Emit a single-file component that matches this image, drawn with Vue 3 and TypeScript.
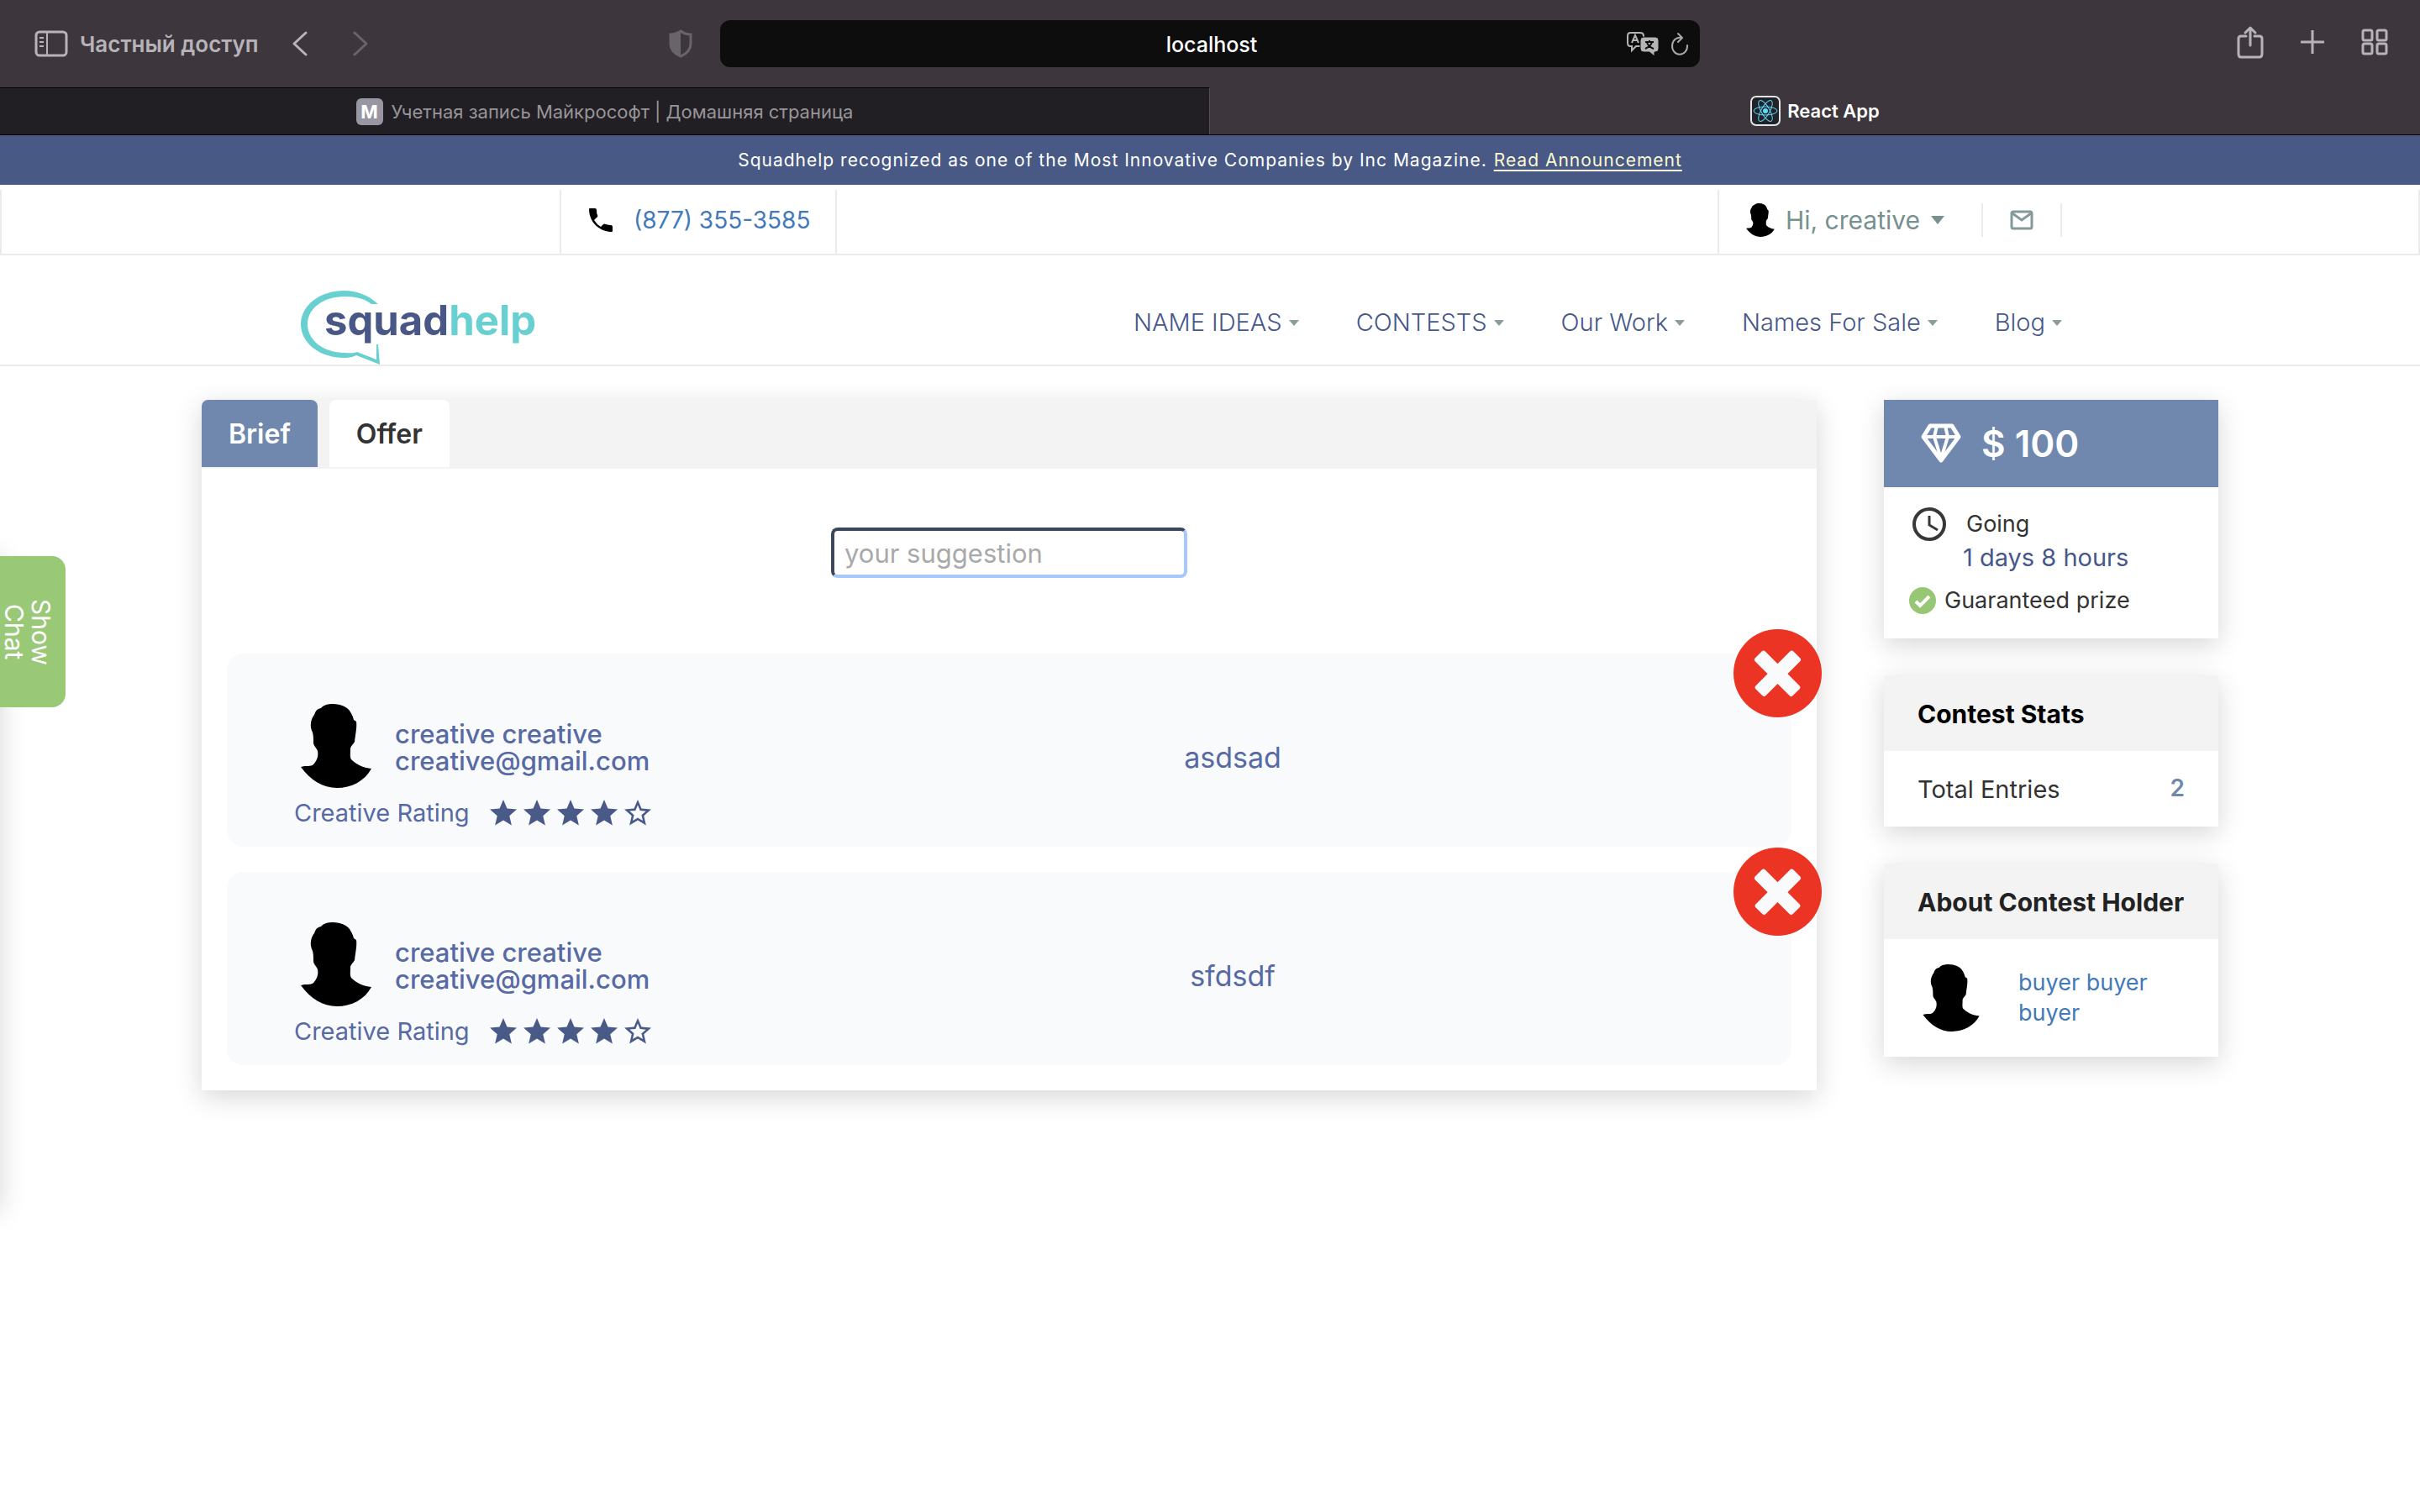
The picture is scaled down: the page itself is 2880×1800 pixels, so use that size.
<script setup lang="ts">
import { ref } from 'vue'

interface Offer {
  id: number
  name: string
  email: string
  text: string
  rating: number
}

const offers: Offer[] = [
  { id: 1, name: 'creative creative', email: 'creative@gmail.com', text: 'asdsad', rating: 4 },
  { id: 2, name: 'creative creative', email: 'creative@gmail.com', text: 'sfdsdf', rating: 4 },
]

const navItems: string[] = ['NAME IDEAS', 'CONTESTS', 'Our Work', 'Names For Sale', 'Blog']

const address = ref('localhost')
const suggestion = ref('')

const headPath =
  'M38 0 C48 0 55 4 58 8 C61 13 62 15 63 19 L66 21 C67 28 65 36 64 45 C62 49 59 50 59 54 C59 60 58 65 61 67 C66 72 74 76 84 77 C76 92 60 100 43 100 C26 100 12 91 0 75 C6 73 12 75 15 72 C20 67 21 61 20 56 C18 51 15 50 15 46 C15 41 15 38 14 34 C10 26 12 18 16 13 C18 8 19 6 24 5 C27 1 33 0 38 0Z'
const starPath =
  'M12 17.27L18.18 21l-1.64-7.03L22 9.24l-7.19-.61L12 2 9.19 8.63 2 9.24l5.46 4.73L5.82 21z'
const starOutlinePath =
  'M22 9.24l-7.19-.62L12 2 9.19 8.63 2 9.24l5.46 4.73L5.82 21 12 17.27 18.18 21l-1.63-7.03L22 9.24zM12 15.4l-3.76 2.27 1-4.28-3.32-2.88 4.38-.38L12 6.1l1.71 4.04 4.38.38-3.32 2.88 1 4.28L12 15.4z'
</script>

<template>
  <div class="page">
    <header class="browser">
      <div class="toolbar">
        <div class="tools">
          <button class="tool sidebar-tool" type="button">
            <svg width="40" height="32" viewBox="0 0 40 32" fill="none" stroke="currentColor" stroke-width="3">
              <rect x="2" y="2" width="36" height="28" rx="4" />
              <path d="M15 2V30" stroke-width="2" />
              <path d="M6 9H11M6 14H11M6 19H11" stroke-width="2" />
            </svg>
            <span>Частный доступ</span>
          </button>
          <button class="tool back" type="button" aria-label="Back">
            <svg width="18" height="30" viewBox="0 0 18 30" fill="none" stroke="currentColor" stroke-width="3" stroke-linecap="round" stroke-linejoin="round"><path d="M16 2L2 15L16 28" /></svg>
          </button>
          <button class="tool forward" type="button" aria-label="Forward">
            <svg width="18" height="30" viewBox="0 0 18 30" fill="none" stroke="currentColor" stroke-width="3" stroke-linecap="round" stroke-linejoin="round"><path d="M2 2L16 15L2 28" /></svg>
          </button>
          <svg class="shield" width="28" height="34" viewBox="0 0 28 34">
            <path d="M14 2C10 5 6 6 2 6V17C2 24 7 29 14 32C21 29 26 24 26 17V6C22 6 18 5 14 2Z" fill="none" stroke="currentColor" stroke-width="3" />
            <path d="M14 1C10 5 6 6 1 6V17C1 24 6 29 14 33Z" fill="currentColor" />
          </svg>
        </div>
        <div class="address">
          <input v-model="address" type="text" aria-label="Address" />
          <div class="address-icons">
            <svg width="38" height="30" viewBox="0 0 38 30" fill="none">
              <path d="M4 2H16Q20 2 20 6V14Q20 18 16 18H11L6 23V18H4Q1 18 1 14V6Q1 2 4 2Z" stroke="#b4b4b4" stroke-width="2" />
              <path d="M6 14L10 5L14 14M7 11H13" stroke="#b4b4b4" stroke-width="2" />
              <path d="M20 7H34Q38 7 38 11V21Q38 25 34 25H33V30L27 25H20Q16 25 16 21V11Q16 7 20 7Z" fill="#b4b4b4" stroke="#0d0d0d" />
              <path d="M22 13H32M27 11V13M30 13C29 17 26 19 22 21M24 14C26 18 29 20 32 21" stroke="#0d0d0d" stroke-width="2" />
            </svg>
            <button class="tool" type="button" aria-label="Reload">
              <svg width="22" height="28" viewBox="0 0 22 28" fill="none" stroke="#a9a9a9" stroke-width="2" stroke-linecap="round" stroke-linejoin="round">
                <path d="M13 7A9 10 0 1 0 20 16M9 2L14 7L9 12" />
              </svg>
            </button>
          </div>
        </div>
        <div class="tools tools-right">
          <button class="tool" type="button" aria-label="Share">
            <svg width="32" height="40" viewBox="0 0 32 40" fill="none" stroke="currentColor" stroke-width="3" stroke-linecap="round" stroke-linejoin="round">
              <path d="M11 13H5Q2 13 2 16V34Q2 38 5 38H27Q30 38 30 34V16Q30 13 27 13H21M16 24V3M10 9L16 3L22 9" />
            </svg>
          </button>
          <button class="tool" type="button" aria-label="New tab">
            <svg width="28" height="28" viewBox="0 0 28 28" stroke="currentColor" stroke-width="3"><path d="M14 0V28M0 14H28" /></svg>
          </button>
          <button class="tool" type="button" aria-label="Tab overview">
            <svg width="32" height="32" viewBox="0 0 32 32" fill="none" stroke="currentColor" stroke-width="3">
              <rect x="2" y="2" width="11" height="12" rx="2" /><rect x="19" y="2" width="11" height="12" rx="2" />
              <rect x="2" y="18" width="11" height="12" rx="2" /><rect x="19" y="18" width="11" height="12" rx="2" />
            </svg>
          </button>
        </div>
      </div>
      <div class="browser-tabs">
        <div class="browser-tab inactive">
          <span class="favicon">M</span>
          <span>Учетная запись Майкрософт | Домашняя страница</span>
        </div>
        <div class="browser-tab current">
          <svg width="36" height="36" viewBox="0 0 36 36" fill="none">
            <rect x="1" y="1" width="34" height="34" rx="6" fill="#20232a" stroke="#e4e4e4" stroke-width="2" />
            <g stroke="#61dafb" stroke-width="1">
              <ellipse cx="18" cy="18" rx="14" ry="5" />
              <ellipse cx="18" cy="18" rx="14" ry="5" transform="rotate(60 18 18)" />
              <ellipse cx="18" cy="18" rx="14" ry="5" transform="rotate(120 18 18)" />
            </g>
            <circle cx="18" cy="18" r="3" fill="#61dafb" />
          </svg>
          <span>React App</span>
        </div>
      </div>
    </header>

    <div class="announcement">
      <span>Squadhelp recognized as one of the Most Innovative Companies by Inc Magazine.</span>
      <a href="#announcement">Read Announcement</a>
    </div>

    <div class="topbar">
      <div class="phone">
        <svg width="30" height="30" viewBox="0 0 30 30"><path d="M1 2Q1 1 2 1H8Q10 1 10 3Q10 7 11 9Q12 11 10 12L7 15Q10 20 15 23L18 20Q19 19 21 20Q24 21 27 21Q29 21 29 23V28Q29 29 28 29C13 29 1 17 1 2Z" /></svg>
        <a href="tel:8773553585">(877) 355-3585</a>
      </div>
      <div class="account">
        <button class="user" type="button">
          <svg width="34" height="40" viewBox="0 0 84 100"><path :d="headPath" fill="#000" /></svg>
          <span>Hi, creative</span>
          <svg width="16" height="10" viewBox="0 0 16 10" fill="#78908f"><path d="M0 0H16L8 10Z" /></svg>
        </button>
        <a class="mail" href="#messages" aria-label="Messages">
          <svg width="28" height="24" viewBox="0 0 28 24" fill="none" stroke="#84999a" stroke-width="3"><rect x="2" y="2" width="24" height="20" rx="2" /><path d="M3 4L14 12L25 4" /></svg>
        </a>
      </div>
    </div>

    <div class="navbar">
      <a class="logo" href="#home" aria-label="squadhelp">
        <svg width="288" height="88" viewBox="0 0 288 88">
          <path d="M92 16C80 5 66 0 52 0C22 0 0 18 0 40C0 62 22 80 52 80C58 80 62 79 66 77L94 88L92 64L90 64L90 82L67 73C62 75 58 74 52 74C27 74 8 59 8 40C8 21 27 7 52 7C66 7 77 10 84 16Z" fill="#68d0d1" />
          <text x="28" y="53" class="logo-text"><tspan fill="#485785">squad</tspan><tspan fill="#68d0d1">help</tspan></text>
        </svg>
      </a>
      <nav>
        <a v-for="item in navItems" :key="item" href="#menu">
          {{ item }}
          <svg width="12" height="7" viewBox="0 0 12 7" fill="#8a9c9e"><path d="M0 0H12L6 7Z" /></svg>
        </a>
      </nav>
    </div>

    <main class="content">
      <section class="card contest">
        <div class="tabs">
          <button class="tab active" type="button">Brief</button>
          <button class="tab" type="button">Offer</button>
        </div>
        <form class="suggest" @submit.prevent>
          <input v-model="suggestion" type="text" placeholder="your suggestion" aria-label="your suggestion" />
        </form>
        <div class="offers">
          <article v-for="offer in offers" :key="offer.id" class="offer">
            <div class="creator">
              <div class="creator-info">
                <svg width="84" height="100" viewBox="0 0 84 100"><path :d="headPath" fill="#000" /></svg>
                <div class="creator-name">
                  <span>{{ offer.name }}</span>
                  <span>{{ offer.email }}</span>
                </div>
              </div>
              <div class="rating">
                <span>Creative Rating</span>
                <div class="stars">
                  <svg v-for="n in 5" :key="n" width="32" height="32" viewBox="2 2 20 20" fill="#4a5a88">
                    <path :d="n <= offer.rating ? starPath : starOutlinePath" />
                  </svg>
                </div>
              </div>
            </div>
            <p class="offer-text">{{ offer.text }}</p>
            <button class="reject" type="button" aria-label="Reject">
              <svg width="105" height="105" viewBox="0 0 106 106">
                <circle cx="53" cy="53" r="53" fill="#eb3424" />
                <g fill="#f9fafc">
                  <rect x="21" y="45" width="64" height="17" rx="3" transform="rotate(45 53 53)" />
                  <rect x="21" y="45" width="64" height="17" rx="3" transform="rotate(-45 53 53)" />
                </g>
              </svg>
            </button>
          </article>
        </div>
      </section>

      <aside class="side">
        <section class="card">
          <div class="prize">
            <svg width="48" height="48" viewBox="0 0 48 48" fill="none" stroke="#fff" stroke-width="5" stroke-linejoin="round">
              <path d="M11 3H37L45 16L24 44L3 16Z" />
              <path d="M3 16H45M19 3L16 16L24 42L32 16L29 3" stroke-width="4" />
            </svg>
            <span>$ 100</span>
          </div>
          <div class="prize-body">
            <div class="time">
              <svg width="40" height="40" viewBox="0 0 40 40" fill="none" stroke="#383838" stroke-width="4"><circle cx="20" cy="20" r="18" /><path d="M20 10V21L30 27" stroke-width="3" /></svg>
              <div>
                <div class="going">Going</div>
                <div class="left">1 days 8 hours</div>
              </div>
            </div>
            <div class="guarantee">
              <svg width="32" height="32" viewBox="0 0 32 32" fill="none"><circle cx="16" cy="16" r="16" fill="#97c774" /><path d="M8 17L13 22L24 11" stroke="#fff" stroke-width="4" /></svg>
              <span>Guaranteed prize</span>
            </div>
          </div>
        </section>
        <section class="card">
          <h2 class="stats-title">Contest Stats</h2>
          <div class="entries"><span>Total Entries</span><b>2</b></div>
        </section>
        <section class="card">
          <h2>About Contest Holder</h2>
          <div class="holder">
            <svg width="68" height="80" viewBox="0 0 84 100"><path :d="headPath" fill="#000" /></svg>
            <a href="#holder">buyer buyer<br />buyer</a>
          </div>
        </section>
      </aside>
    </main>

    <div class="chat">
      <button type="button">Show<br />Chat</button>
    </div>
  </div>
</template>

<style>
html,
body {
  margin: 0;
  background: #fff;
}
</style>

<style scoped>
.page {
  position: relative;
  min-height: 100vh;
  overflow: hidden;
  font-family: Inter, "Liberation Sans", sans-serif;
  font-size: 27px;
  color: #333;
}
.page *,
.page *::before {
  box-sizing: border-box;
}
svg {
  display: block;
  flex: none;
}
a {
  color: #4379b8;
  text-decoration: none;
}
button,
input {
  font: inherit;
  color: inherit;
}
button {
  padding: 0;
  border: 0;
  background: none;
}

/* Browser window */
.browser {
  background: #3d373d;
  color: #b8b3b9;
}
.toolbar {
  display: grid;
  grid-template-columns: 1fr 1166px 1fr;
  align-items: center;
  height: 104px;
}
.tools {
  display: flex;
  align-items: center;
  padding: 0 33px 0 41px;
}
.tool {
  display: flex;
  align-items: center;
}
.sidebar-tool {
  gap: 14px;
  font-size: 26px;
  font-weight: 600;
}
.back {
  margin-left: 40px;
}
.forward {
  margin-left: 54px;
  color: #69636a;
}
.shield {
  margin-left: auto;
  color: #69636a;
}
.tools-right {
  justify-content: flex-end;
  gap: 44px;
  padding: 0 38px 4px 0;
}
.address {
  position: relative;
}
.address input {
  display: block;
  width: 100%;
  height: 56px;
  padding: 2px 0 0 4px;
  border: 0;
  border-radius: 12px;
  background: #0d0d0d;
  color: #fff;
  font-size: 25px;
  font-weight: 500;
  text-align: center;
}
.address-icons {
  position: absolute;
  top: 0;
  right: 13px;
  display: flex;
  align-items: center;
  gap: 14px;
  height: 56px;
}
.browser-tabs {
  display: grid;
  grid-template-columns: 1fr 1fr;
  height: 57px;
  border-bottom: 1px solid #000;
}
.browser-tab {
  display: flex;
  align-items: center;
  justify-content: center;
  font-size: 22px;
}
.inactive {
  gap: 10px;
  border-top: 1px solid #000;
  border-right: 1px solid #575158;
  background: #211f23;
  color: #98959a;
}
.current {
  gap: 8px;
  color: #fff;
  font-weight: 600;
}
.favicon {
  width: 32px;
  border-radius: 6px;
  background: #9796a2;
  color: #fff;
  font-weight: 700;
  line-height: 32px;
  text-align: center;
}

/* Site header */
.announcement {
  display: flex;
  justify-content: center;
  gap: 8px;
  height: 59px;
  background: #485985;
  color: #fff;
  font-size: 21px;
  letter-spacing: 1px;
  line-height: 59px;
}
.announcement a {
  color: #fbf8d3;
  text-decoration: underline;
  text-underline-offset: 4px;
}
.topbar {
  display: flex;
  justify-content: space-between;
  height: 78px;
  margin-top: 6px;
  padding: 0 424px 0 664px;
  border: 2px solid #ebebeb;
  border-top: 0;
}
.phone {
  display: flex;
  align-items: center;
  gap: 24px;
  padding: 0 30px 4px 32px;
  border: solid #ebebeb;
  border-width: 0 2px;
  font-size: 28px;
}
.account {
  display: flex;
  align-items: center;
  padding: 0 0 4px 32px;
  border-left: 2px solid #ebebeb;
}
.user {
  display: flex;
  align-items: center;
  gap: 13px;
  padding-right: 44px;
  color: #78908f;
  font-size: 30px;
}
.mail {
  padding: 8px 32px;
  border: solid #ebebeb;
  border-width: 0 2px;
}
.navbar {
  display: flex;
  align-items: flex-end;
  justify-content: space-between;
  height: 132px;
  padding: 0 426px 0 358px;
  border-bottom: 2px solid #ebebeb;
}
.logo-text {
  font-size: 49px;
  font-weight: 700;
}
nav {
  display: flex;
  gap: 68px;
  padding-bottom: 32px;
}
nav a {
  display: flex;
  align-items: center;
  gap: 8px;
  color: #46578a;
  font-size: 29px;
  font-weight: 300;
  line-height: 36px;
}

/* Content */
.content {
  display: grid;
  grid-template-columns: 1fr 398px;
  align-items: start;
  gap: 80px;
  padding: 40px 240px;
}
.card {
  background: #fff;
  box-shadow: 0 8px 30px rgba(0, 0, 0, 0.16);
}
.tabs {
  display: flex;
  gap: 14px;
  height: 82px;
  background: #f3f3f3;
}
.tab {
  height: 80px;
  padding: 0 32px;
  border-radius: 8px 8px 0 0;
  background: #fff;
  font-size: 32px;
  font-weight: 600;
}
.active {
  background: #7088ad;
  color: #fff;
}
.suggest {
  display: flex;
  justify-content: center;
  padding: 70px 0 90px;
}
.suggest input {
  width: 424px;
  height: 60px;
  padding: 0 12px;
  border: 4px solid;
  border-color: #3a475c #a6c8ff #a6c8ff #3a475c;
  border-radius: 8px;
  outline: 0;
  background: #fff;
  font-size: 31px;
}
.suggest input::placeholder {
  color: #a9a9a9;
  opacity: 1;
}
.offers {
  display: grid;
  gap: 30px;
  padding: 0 30px 30px;
}
.offer {
  position: relative;
  display: grid;
  grid-template-columns: 532px 1fr;
  height: 230px;
  padding: 60px 80px 0;
  border-radius: 20px;
  background: #f8fafc;
  color: #586aa4;
}
.creator-info {
  display: flex;
  gap: 28px;
  padding-left: 8px;
}
.creator-name {
  display: grid;
  align-content: start;
  padding-top: 20px;
  font-size: 31px;
  font-weight: 500;
  line-height: 32px;
}
.rating {
  display: flex;
  align-items: center;
  gap: 24px;
  margin-top: 12px;
  font-size: 29px;
  line-height: 36px;
}
.stars {
  display: flex;
  gap: 8px;
}
.offer-text {
  margin: 0;
  padding-top: 40px;
  font-size: 34px;
  line-height: 48px;
  text-align: center;
}
.reject {
  position: absolute;
  top: -29px;
  right: -36px;
}

/* Side column */
.side {
  display: grid;
  gap: 44px;
}
.prize {
  display: flex;
  align-items: center;
  gap: 24px;
  height: 104px;
  padding-left: 44px;
  background: #7088ad;
  color: #fff;
  font-size: 44px;
  font-weight: 600;
}
.prize-body {
  height: 180px;
  padding: 24px 30px;
}
.time {
  display: flex;
  gap: 20px;
  padding-left: 4px;
}
.going {
  padding-left: 4px;
  line-height: 40px;
}
.left {
  color: #46578a;
  font-size: 29px;
  line-height: 40px;
}
.guarantee {
  display: flex;
  align-items: center;
  gap: 10px;
  margin-top: 14px;
}
h2 {
  height: 90px;
  margin: 0;
  padding: 0 40px;
  background: #f3f3f3;
  color: #222;
  font-size: 30px;
  font-weight: 700;
  line-height: 92px;
  white-space: nowrap;
}
.stats-title {
  color: #000;
}
.entries {
  display: flex;
  justify-content: space-between;
  height: 90px;
  padding: 0 40px;
  font-size: 29px;
  line-height: 92px;
}
.entries b {
  color: #7088ad;
  font-size: 28px;
  font-weight: 600;
  line-height: 88px;
}
.holder {
  display: flex;
  gap: 46px;
  padding: 30px 46px;
}
.holder a {
  padding-top: 4px;
  line-height: 36px;
}

/* Collapsed chat drawer */
.chat {
  position: absolute;
  top: 662px;
  left: -600px;
  width: 600px;
  height: 780px;
  box-shadow: 0 0 30px rgba(0, 0, 0, 0.16);
}
.chat button {
  position: absolute;
  top: 0;
  left: 100%;
  width: 78px;
  height: 180px;
  padding-right: 12px;
  border-radius: 0 16px 16px 0;
  background: #99c877;
  color: #fff;
  font-size: 30px;
  line-height: 32px;
  writing-mode: vertical-rl;
}
</style>
